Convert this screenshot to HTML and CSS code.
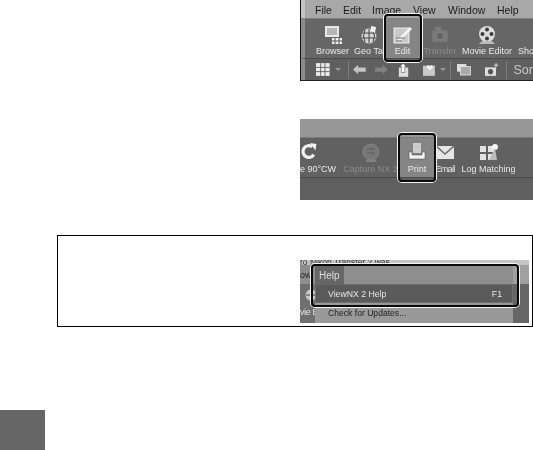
FILE: index.html
```html
<!DOCTYPE html>
<html lang="en">
<head>
<meta charset="utf-8">
<title>ViewNX 2</title>
<link rel="stylesheet" href="styles.css">
</head>
<body>
<section class="shot shot-edit">
  <div class="soft">
    <div class="menubar">
      <span class="m-file">File</span><span class="m-edit">Edit</span><span class="m-image">Image</span><span class="m-view">View</span><span class="m-window">Window</span><span>Help</span>
    </div>
    <div class="toolbar">
      <div class="tool w-browser">
        <svg width="18" height="18" viewBox="0 0 18 18"><rect x="1" y="0" width="14" height="11" fill="#e8e8e8"/><rect x="3" y="2" width="10" height="7" fill="#b5b5b5"/><path d="M8 12h10v6H8z" fill="#f2f2f2"/><path d="M11 12v6M15 12v6M8 15h10" stroke="#555"/></svg>
        <span>Browser</span>
      </div>
      <div class="tool w-geo">
        <svg width="18" height="18" viewBox="0 0 18 18"><circle cx="9" cy="10" r="7.5" fill="#d5d5d5"/><path d="M2 7h14M2 12h14M9 3v14M5 4q-3 6 0 12M13 4q3 6 0 12" stroke="#444" fill="none"/><path d="M11 0l5 1-1 6-4-2z" fill="#eee"/></svg>
        <span>Geo Ta</span>
      </div>
      <div class="tool w-edit on">
        <svg width="20" height="18" viewBox="0 0 20 18"><rect x="1" y="2" width="15" height="15" fill="#c9c9c9" stroke="#eee"/><path d="M4 14L17 1l2 2L7 15z" fill="#f5f5f5"/><path d="M3 12h9M3 15h6" stroke="#777"/></svg>
        <span>Edit</span>
      </div>
      <div class="tool w-transfer dim">
        <svg width="18" height="18" viewBox="0 0 18 18"><rect x="1" y="4" width="16" height="12" rx="2" fill="#777"/><circle cx="9" cy="10" r="4" fill="#656565" stroke="#858585"/><rect x="4" y="1" width="6" height="3" fill="#7c7c7c"/></svg>
        <span>Transfer</span>
      </div>
      <div class="tool w-movie">
        <svg width="20" height="19" viewBox="0 0 20 19"><circle cx="10" cy="8" r="8" fill="#dcdcdc"/><g fill="#3c3c3c"><circle cx="10" cy="3.5" r="2"/><circle cx="10" cy="12.5" r="2"/><circle cx="5.5" cy="8" r="2"/><circle cx="14.5" cy="8" r="2"/></g><path d="M2 18h16l-3-3H5z" fill="#bbb"/></svg>
        <span>Movie Editor</span>
      </div>
      <div class="tool w-show"><span>Sho</span></div>
    </div>
    <div class="iconbar">
      <svg class="i-grid" width="16" height="15" viewBox="0 0 16 15"><path d="M0 0h16v15H0z" fill="#eee"/><path d="M5.500 0v15M10.500 0v15M0 5h16M0 10h16" stroke="#555"/></svg>
      <i class="caret"></i>
      <i class="sep"></i>
      <svg class="i-prev" width="15" height="11" viewBox="0 0 15 11"><path d="M0 5.500L6 0v3h9v5H6v3z" fill="#c4c4c4"/></svg>
      <svg class="i-next" width="15" height="11" viewBox="0 0 15 11"><path d="M15 5.500L9 0v3H0v5h9v3z" fill="#808080"/></svg>
      <svg class="i-up" width="13" height="16" viewBox="0 0 13 16"><path d="M1 5h11v11H1z" fill="#e0e0e0"/><path d="M6 0l4 4H8v7H4V4H2z" fill="#fff" stroke="#444" stroke-width=".6"/></svg>
      <svg class="i-heart" width="16" height="15" viewBox="0 0 16 15"><path d="M0 3h14v12H0z" fill="#c8c8c8"/><path d="M8 9L4 4q2-3 4 0 2-3 4 0z" fill="#f4f4f4"/></svg>
      <i class="caret small"></i>
      <i class="sep"></i>
      <svg width="16" height="13" viewBox="0 0 16 13"><path d="M0 0h11v9H0z" fill="#ddd"/><path d="M4 3h12v10H4z" fill="#a9a9a9" stroke="#e8e8e8"/></svg>
      <svg class="i-cam" width="16" height="15" viewBox="0 0 16 15"><path d="M0 5h13v10H0z" fill="#ddd"/><circle cx="6.500" cy="10" r="3" fill="#555"/><path d="M13 0v5M10.500 2.500h5" stroke="#eee"/></svg>
      <i class="sep"></i>
      <span class="sort">Sor</span>
    </div>
  </div>
  <div class="ring ring-edit"></div>
</section>

<section class="shot shot-print">
  <div class="soft">
    <div class="band"></div>
    <div class="toolbar print-bar">
      <div class="tool w-rot">
        <svg width="18" height="17" viewBox="0 0 16 16"><path d="M12.500 11A5.500 5.500 0 1 1 11 3.500" fill="none" stroke="#f2f2f2" stroke-width="3"/><path d="M9 0l6 1-1 6z" fill="#f2f2f2"/></svg>
        <span>e 90°CW</span>
      </div>
      <div class="tool w-capture dim">
        <svg width="20" height="20" viewBox="0 0 20 20"><circle cx="10" cy="9" r="8" fill="#777" stroke="#858585"/><path d="M5 18h10" stroke="#808080" stroke-width="2"/><path d="M6 6h8M6 10h8" stroke="#5f5f5f"/></svg>
        <span>Capture NX 2</span>
      </div>
      <div class="tool w-print on">
        <svg width="18" height="18" viewBox="0 0 18 18"><path d="M5 0h8v10H5z" fill="#ccc"/><path d="M1 9h3v3h10V9h3v7H1z" fill="#f4f4f4" stroke="#444" stroke-width=".5"/></svg>
        <span>Print</span>
      </div>
      <div class="tool w-email">
        <svg width="18" height="13" viewBox="0 0 18 13"><path d="M0 0h18v13H0z" fill="#e6e6e6"/><path d="M0 0l9 8 9-8" fill="none" stroke="#6d6d6d" stroke-width="1.500"/></svg>
        <span>Email</span>
      </div>
      <div class="tool w-log">
        <svg width="20" height="18" viewBox="0 0 20 18"><path d="M1 2h6v6H1zM9 2h6v6H9zM1 10h6v6H1zM9 10h6v6H9z" fill="#e4e4e4"/><circle cx="16" cy="3" r="3" fill="#f8f8f8"/><path d="M16 4l-6 12h8z" fill="#bbb"/></svg>
        <span>Log Matching</span>
      </div>
    </div>
    <div class="print-foot"></div>
  </div>
  <div class="ring ring-print"></div>
</section>

<section class="note">
  <div class="shot shot-help">
    <div class="soft">
      <div class="cut-title"><span>ro Nikon Transfer 2 was</span></div>
      <div class="help-body">
        <div class="side-left">
          <span class="ow">ow</span>
          <svg width="13" height="13" viewBox="0 0 13 13"><circle cx="8" cy="6" r="5.500" fill="#c8c8c8"/><path d="M3 6h10M8 1v10" stroke="#444"/></svg>
          <span class="vie">vie E</span>
        </div>
        <div class="menu">
          <div class="menu-head"><span>Help</span></div>
          <div class="menu-row sel"><span>ViewNX 2 Help</span><span>F1</span></div>
          <div class="menu-row"><span>Check for Updates...</span></div>
        </div>
        <div class="side-right"></div>
      </div>
    </div>
    <div class="ring ring-help"></div>
  </div>
</section>

<div class="tab"></div>
</body>
</html>
```
FILE: styles.css
```css
* { box-sizing: border-box; }
html, body { margin: 0; height: 100%; }
body {
  width: 533px;
  height: 450px;
  background: #fff;
  display: flex;
  flex-direction: column;
  overflow: hidden;
  font-family: "Liberation Sans", Arial, sans-serif;
}
.shot {
  position: relative;
  width: 233px;
  height: 81px;
  margin-left: 300px;
  flex: none;
}
.shot-print { margin-top: 38px; }
.soft {
  height: 100%;
  filter: grayscale(1) blur(.45px);
  overflow: hidden;
  display: flex;
  flex-direction: column;
}

.shot-edit { border-left: 1px solid #111; border-bottom: 1px solid #222; }
.menubar {
  height: 18px;
  background: #a8a8a8;
  color: #1c1c1c;
  font-size: 10.500px;
  line-height: 18px;
  padding: 1px 0 0 10px;
  display: flex;
  border-left: 4px solid #c4c4c4;
  flex: none;
}
.m-file { width: 28px; }
.m-edit { width: 29px; }
.m-image { width: 41px; }
.m-view { width: 35px; }
.m-window { width: 49px; }

.toolbar {
  height: 41px;
  background: #666;
  display: flex;
  flex: none;
  border-top: 1px solid #808080;
  border-bottom: 1px solid #4c4c4c;
  border-left: 4px solid #8c8c8c;
}
.tool {
  display: flex;
  flex-direction: column;
  align-items: center;
  justify-content: space-between;
  color: #e9e9e9;
  font-size: 9px;
  line-height: 11px;
  padding: 7px 0 1px;
  white-space: nowrap;
  flex: none;
}
.tool.dim { color: #8b8b8b; }
.tool.on { background: #858585; }
.w-browser { width: 41px; margin-left: 7px; }
.w-geo { width: 31px; }
.w-edit { width: 37px; }
.w-transfer { width: 38px; }
.w-movie { width: 56px; }
.w-show { width: 18px; justify-content: flex-end; align-items: flex-start; padding-left: 3px; }

.iconbar {
  flex: 1;
  background: #5f5f5f;
  border-left: 4px solid #8c8c8c;
  display: flex;
  align-items: center;
  padding-left: 11px;
  gap: 7px;
}
.caret { width: 0; height: 0; border: 3px solid transparent; border-top: 3px solid #999; border-bottom: 0; margin-left: -2px; }
.caret.small { margin-left: -4px; margin-right: -3px; }
.sep { width: 1px; height: 18px; background: #7d7d7d; }
.i-prev { margin-left: -2px; }
.i-next { margin-left: 2px; }
.i-up { margin-left: 3px; }
.i-heart { margin-left: 7px; }
.i-cam { margin-left: 7px; }
.sort { color: #c8c8c8; font-size: 12.500px; white-space: nowrap; }

.band { height: 18px; background: #969696; flex: none; }
.print-bar { border-left: 0; border-top-color: #7c7c7c; background: #616161; }
.print-bar .tool { padding-bottom: 2px; }
.print-foot { flex: 1; background: #5f5f5f; }
.w-rot { width: 38px; align-items: flex-start; padding-top: 5px; }
.w-capture { width: 60px; padding-top: 5px; padding-left: 5px; }
.w-print { width: 37px; padding-top: 5px; border-left: 1px solid #5a5a5a; }
.w-email { width: 20px; padding-top: 8px; }
.w-email span { letter-spacing: -.7px; }
.w-log { width: 63px; padding-top: 6px; margin-left: 2px; }

.note {
  margin: 35px 0 0 57px;
  height: 92px;
  border: 1px solid #000;
  flex: none;
  display: flex;
  justify-content: flex-end;
  align-items: flex-end;
}
.shot-help {
  margin: 0 3px 3px 0;
  width: 229px;
  height: 63px;
}
.cut-title {
  height: 5px;
  background: #c4c4c4;
  font-size: 8.500px;
  line-height: 4px;
  color: #333;
  white-space: nowrap;
  overflow: hidden;
  flex: none;
}
.help-body { flex: 1; display: flex; min-height: 0; }
.side-left {
  width: 15px;
  background: #6f6f6f;
  color: #e4e4e4;
  font-size: 9px;
  display: flex;
  flex-direction: column;
  overflow: hidden;
  line-height: 11px;
  flex: none;
}
.side-left svg { flex: none; margin: 5px 0 0 3px; }
.side-left .ow { background: #8d8d8d; color: #222; height: 19px; line-height: 21px; flex: none; }
.side-left .vie { white-space: nowrap; margin-top: 5px; letter-spacing: -.4px; }
.menu { width: 198px; background: #999; flex: none; }
.menu-head { height: 19px; background: #8e8e8e; }
.menu-head span {
  display: inline-block;
  width: 29px;
  height: 19px;
  background: #666;
  color: #ddd;
  font-size: 10px;
  line-height: 19px;
  padding-left: 4px;
}
.menu-row {
  height: 19px;
  display: flex;
  justify-content: space-between;
  align-items: center;
  padding: 0 10px 0 13px;
  font-size: 8.600px;
  color: #242424;
  white-space: nowrap;
}
.menu-row.sel { background: #5a5a5a; color: #e8e8e8; font-size: 8.700px; border: 1px solid #6f6f6f; padding-left: 12px; }
.side-right { flex: 1; background: #666; border-top: 19px solid #a0a0a0; }

.ring {
  position: absolute;
  border: 2px solid #0a0a0a;
  border-radius: 4px;
  box-shadow: 0 0 0 1px #f4f4f4;
}
.ring-edit { left: 83px; top: 14px; width: 38px; height: 48px; }
.ring-print { left: 98px; top: 14px; width: 38px; height: 49px; }
.ring-help { left: 11px; top: 4px; width: 208px; height: 43px; }

.tab {
  width: 45px;
  height: 40px;
  background: #666;
  margin-top: auto;
  flex: none;
}
```
